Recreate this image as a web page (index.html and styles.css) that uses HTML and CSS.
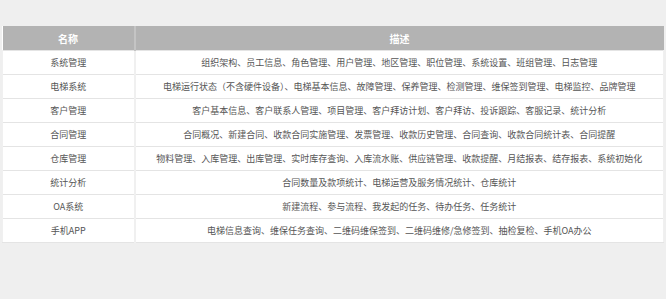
FILE: index.html
```html
<!DOCTYPE html>
<html>
<head>
  <meta charset="UTF-8">
  <title>功能模块</title>
  <link rel="stylesheet" href="styles.css">
</head>
<body>
  <div class="wrap">
    <table class="modules">
      <thead>
        <tr>
          <th class="col-name">名称</th>
          <th>描述</th>
        </tr>
      </thead>
      <tbody>
        <tr><td>系统管理</td><td>组织架构、员工信息、角色管理、用户管理、地区管理、职位管理、系统设置、班组管理、日志管理</td></tr>
        <tr><td>电梯系统</td><td>电梯运行状态（不含硬件设备）、电梯基本信息、故障管理、保养管理、检测管理、维保签到管理、电梯监控、品牌管理</td></tr>
        <tr><td>客户管理</td><td>客户基本信息、客户联系人管理、项目管理、客户拜访计划、客户拜访、投诉跟踪、客服记录、统计分析</td></tr>
        <tr><td>合同管理</td><td>合同概况、新建合同、收款合同实施管理、发票管理、收款历史管理、合同查询、收款合同统计表、合同提醒</td></tr>
        <tr><td>仓库管理</td><td>物料管理、入库管理、出库管理、实时库存查询、入库流水账、供应链管理、收款提醒、月结报表、结存报表、系统初始化</td></tr>
        <tr><td>统计分析</td><td>合同数量及款项统计、电梯运营及服务情况统计、仓库统计</td></tr>
        <tr><td>OA系统</td><td>新建流程、参与流程、我发起的任务、待办任务、任务统计</td></tr>
        <tr><td>手机APP</td><td>电梯信息查询、维保任务查询、二维码维保签到、二维码维修/急修签到、抽检复检、手机OA办公</td></tr>
      </tbody>
    </table>
  </div>
</body>
</html>
```

FILE: styles.css
```css
body {
  margin: 0;
  background: #efefef;
  font-family: "Noto Sans CJK SC", "Liberation Sans", sans-serif;
  color: #555;
}

.wrap {
  padding: 26px 2px;
}

.modules {
  width: 662px;
  border-collapse: collapse;
  background: #fff;
  font-size: 9px;
}

.modules th {
  background: #b3b3b3;
  color: #fff;
  font-weight: bold;
  font-size: 10px;
  height: 24px;
  padding: 0;
  border-left: 2px solid #c4c4c4;
}

.modules th:first-child {
  border-left: none;
}

.modules .col-name {
  width: 131px;
}

.modules td {
  height: 23px;
  padding: 0;
  text-align: center;
  border-top: 1px solid #e4e4e4;
  border-left: 2px solid #f0f0f0;
}

.modules td:first-child {
  border-left: 1px solid #f0f0f0;
}

.modules td:last-child {
  border-right: 1px solid #f0f0f0;
}

.modules tr:last-child td {
  border-bottom: 1px solid #e4e4e4;
}
```
